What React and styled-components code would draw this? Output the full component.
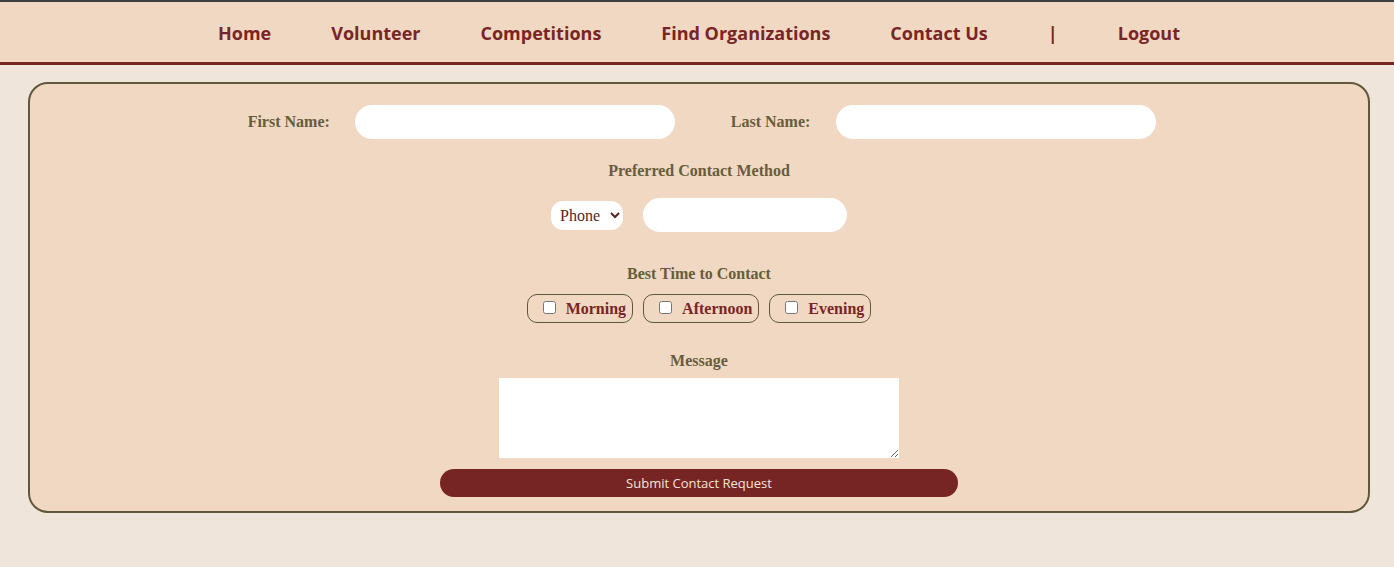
import React from "react";
import styled, { createGlobalStyle } from "styled-components";

const Global = createGlobalStyle`
  html, body { margin: 0; padding: 0; }
  body {
    background: #efe5da;
    font-family: "Liberation Serif", "Times New Roman", serif;
  }
`;

const Nav = styled.nav`
  background: #f0d8c2;
  border-top: 2px solid #3e3e3e;
  border-bottom: 3px solid #772425;
  height: 59px;
  box-sizing: content-box;
  display: flex;
  align-items: center;
  justify-content: center;
  gap: 60px;
  padding: 1px 0 0 4px;
`;

const NavLink = styled.a`
  font-family: "Open Sans", "Noto Sans", sans-serif;
  font-weight: 700;
  font-size: 18px;
  color: #7a2525;
  text-decoration: none;
  cursor: pointer;
`;

const Card = styled.form`
  margin: 17px 24px 0 28px;
  background: #f0d8c3;
  border: 2px solid #5f583c;
  border-radius: 20px;
  padding: 21px 0 14px;
  display: flex;
  flex-direction: column;
  align-items: center;
`;

const Row = styled.div`
  display: flex;
  align-items: center;
  justify-content: center;
  gap: ${(p) => p.$gap || 0}px;
  margin-top: ${(p) => p.$mt || 0}px;
  padding-left: ${(p) => p.$pl || 0}px;
`;

const Label = styled.label`
  font-family: "Liberation Serif", "Times New Roman", serif;
  font-weight: 700;
  font-size: 16px;
  color: #675d3b;
  line-height: 18px;
  margin-right: ${(p) => p.$mr || 0}px;
  margin-top: ${(p) => p.$mt || 0}px;
  display: block;
`;

const TextInput = styled.input`
  width: ${(p) => p.$w}px;
  height: 34px;
  box-sizing: border-box;
  border: none;
  border-radius: 17px;
  background: #fff;
  padding: 0 14px;
  font-family: "Liberation Serif", serif;
  font-size: 16px;
  outline: none;
  margin-right: ${(p) => p.$mr || 0}px;
`;

const Select = styled.select`
  width: 72px;
  height: 29px;
  border: none;
  border-radius: 12px;
  background: #fff;
  font-family: "Liberation Serif", "Times New Roman", serif;
  font-size: 16px;
  color: #5a2323;
  padding: 0 2px 0 5px;
  outline: none;
`;

const Pill = styled.label`
  display: flex;
  align-items: center;
  height: 29px;
  box-sizing: border-box;
  border: 1px solid #5f583c;
  border-radius: 10px;
  padding: 1px 6px 0 11px;
  font-family: "Liberation Serif", "Times New Roman", serif;
  font-weight: 700;
  font-size: 16px;
  color: #7a2525;
  cursor: pointer;
`;

const Check = styled.input`
  margin: 0 10px 3px 4px;
  width: 13px;
  height: 13px;
`;

const Message = styled.textarea`
  width: 400px;
  height: 80px;
  box-sizing: border-box;
  border: none;
  background: #fff;
  margin-top: 8px;
  outline: none;
  display: block;
`;

const Submit = styled.button`
  margin-top: 11px;
  width: 518px;
  height: 28px;
  border: none;
  border-radius: 14px;
  background: #772425;
  color: #f5e4d6;
  font-family: "Open Sans", "Noto Sans", sans-serif;
  font-size: 13px;
  padding-top: 1px;
  cursor: pointer;
`;

export default function App() {
  const links = ["Home", "Volunteer", "Competitions", "Find Organizations", "Contact Us", "|", "Logout"];
  return (
    <>
      <Global />
      <Nav>
        {links.map((l) => (
          <NavLink key={l}>{l}</NavLink>
        ))}
      </Nav>
      <Card onSubmit={(e) => e.preventDefault()}>
        <Row $pl={6}>
          <Label $mr={25}>First Name:</Label>
          <TextInput $w={320} $mr={56} />
          <Label $mr={26}>Last Name:</Label>
          <TextInput $w={320} />
        </Row>
        <Label $mt={23}>Preferred Contact Method</Label>
        <Row $gap={20} $mt={18}>
          <Select defaultValue="Phone">
            <option>Phone</option>
            <option>Email</option>
          </Select>
          <TextInput $w={204} />
        </Row>
        <Label $mt={33}>Best Time to Contact</Label>
        <Row $gap={10} $mt={11}>
          <Pill><Check type="checkbox" />Morning</Pill>
          <Pill><Check type="checkbox" />Afternoon</Pill>
          <Pill><Check type="checkbox" />Evening</Pill>
        </Row>
        <Label $mt={29}>Message</Label>
        <Message />
        <Submit type="submit">Submit Contact Request</Submit>
      </Card>
    </>
  );
}
